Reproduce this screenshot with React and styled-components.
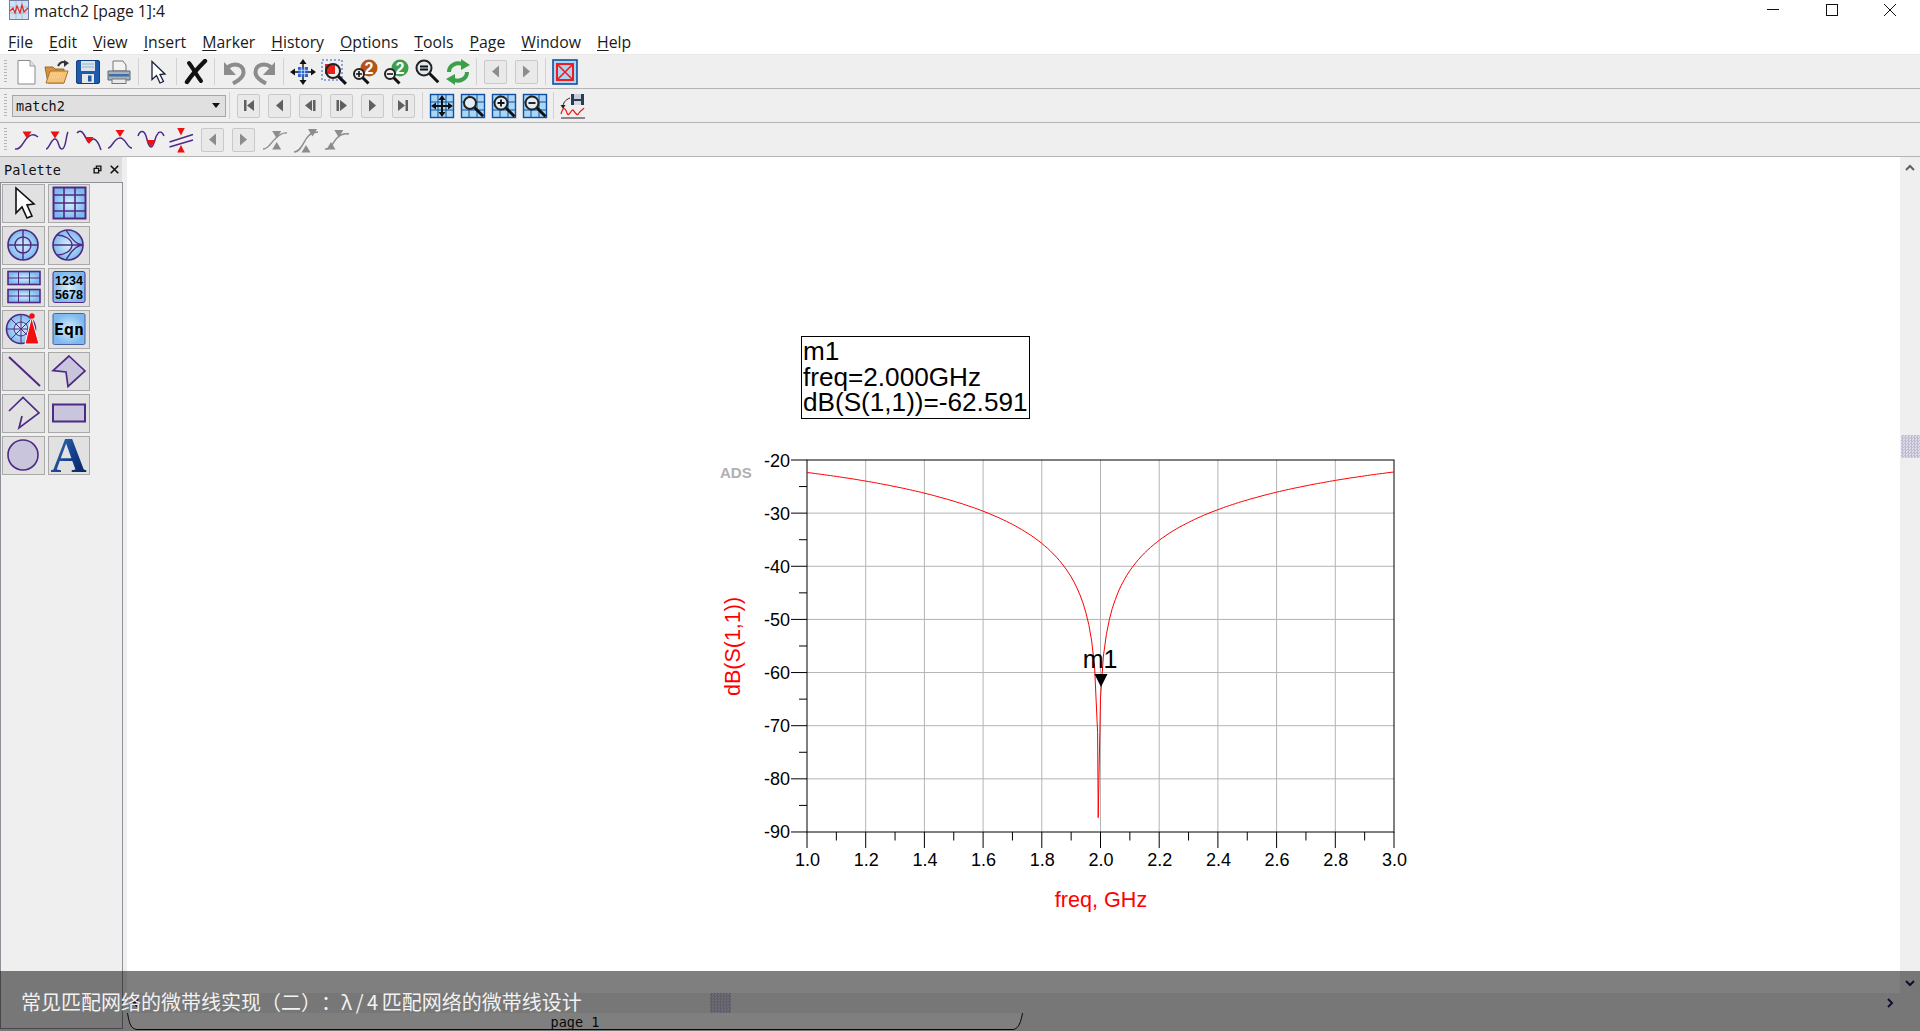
import React from 'react'
import styled, { createGlobalStyle } from 'styled-components'

const GlobalStyle = createGlobalStyle`
  html, body { margin: 0; padding: 0; background: #fff; overflow: hidden; }
  #root { height: 100vh; }
`

const PURPLE = '#4f2a85'
const LAVENDER = '#c9c5dd'
const GREYED = '#8c8c8c'
const MONO = '"DejaVu Sans Mono", "Liberation Mono", monospace'

const Frame = styled.div`
  position: relative;
  display: flex;
  flex-direction: column;
  height: 100vh;
  overflow: hidden;
  background: #fff;
`
const TitleBar = styled.div`
  display: flex;
  align-items: flex-start;
  height: 30px;
  padding-left: 9px;
`
const TitleText = styled.span`
  margin: 1px 0 0 5px;
  font: 15.7px/20px "Open Sans", "Noto Sans", sans-serif;
  color: #1a1a1a;
`
const WindowButtons = styled.div`
  display: flex;
  margin-left: auto;
  padding-right: 24px;
  gap: 46.5px;
`
const MenuBar = styled.div`
  display: flex;
  align-items: center;
  gap: 16px;
  height: 24px;
  padding-left: 8px;
  border-bottom: 1px solid #e9e9e9;
  font: 15.8px "Open Sans", "Noto Sans", sans-serif;
  color: #1a1a1a;
  u { text-underline-offset: 2px; }
`
const Toolbar = styled.div`
  display: flex;
  align-items: center;
  box-sizing: border-box;
  height: 34px;
  padding-left: 4px;
  background: #efefef;
  border-bottom: 1px solid #b4b4b4;
`
const Grip = styled.i`
  width: 3px;
  height: 24px;
  margin-right: ${p => p.$lead}px;
  background: repeating-linear-gradient(#b5b5b5 0 1px, transparent 1px 3px);
`
const Slot = styled.span`
  display: flex;
  align-items: center;
  justify-content: center;
  width: 31px;
  height: 33px;
  flex: none;
`
const Sep = styled.i`
  width: 1px;
  height: 27px;
  flex: none;
  margin: 0 ${p => p.$w / 2 - 0.5}px;
  background: #d2d2d2;
`
const NavButton = styled.span`
  display: flex;
  align-items: center;
  justify-content: center;
  box-sizing: border-box;
  width: 23px;
  height: 24px;
  background: #e9e9e9;
  border: 1px solid #c9c9c9;
  border-radius: 2px;
`
const Combo = styled.div`
  display: flex;
  align-items: center;
  justify-content: space-between;
  box-sizing: border-box;
  width: 214px;
  height: 22px;
  padding: 0 5px 0 3px;
  background: #e0e0e0;
  border: 1px solid #a6a6a6;
  font: 13.5px ${MONO};
  color: #111;
`
const ComboArrow = styled.i`
  border: 4.5px solid transparent;
  border-top: 5px solid #111;
  border-bottom: 0;
`
const Main = styled.div`
  display: flex;
  flex: 1;
  min-height: 0;
`
const Dock = styled.div`
  display: flex;
  flex-direction: column;
  width: 127px;
  flex: none;
  background: #efefef;
`
const DockHeader = styled.div`
  display: flex;
  align-items: center;
  gap: 8px;
  box-sizing: border-box;
  width: 122px;
  height: 25px;
  padding: 0 3px 0 4px;
  background: #dedede;
  font: 13.5px ${MONO};
  color: #111;
  span { margin-right: auto; }
`
const DockPanel = styled.div`
  flex: 1;
  box-sizing: border-box;
  width: 123px;
  margin-bottom: 2px;
  padding: 1px;
  border: 1px solid #8f8f97;
`
const PaletteGrid = styled.div`
  display: grid;
  grid-template-columns: 43px 42px;
  grid-auto-rows: 39px;
  gap: 3px;
`
const PaletteButton = styled.span`
  display: block;
  box-sizing: border-box;
  background: #e1e1e1;
  border: 1px solid #a9a9a9;
  svg { display: block; overflow: visible; }
  &:nth-child(even) svg { margin-left: -1px; }
`
const Workspace = styled.div`
  display: flex;
  flex-direction: column;
  flex: 1;
  min-width: 0;
`
const WorkRow = styled.div`
  display: flex;
  flex: 1;
  min-height: 0;
`
const Canvas = styled.div`
  flex: 1;
  padding: 179px 0 0 573px;
`
const MarkerBox = styled.div`
  box-sizing: border-box;
  width: 229px;
  height: 83px;
  margin-left: 101px;
  padding: 2px 0 0 1px;
  border: 1px solid #000;
  font: 26.15px/25.7px "Liberation Sans", Arial, sans-serif;
  color: #000;
  white-space: nowrap;
`
const ChartSvg = styled.svg`
  display: block;
  margin-top: 31px;
  font-family: "Liberation Sans", Arial, sans-serif;
`
const VScroll = styled.div`
  display: flex;
  flex-direction: column;
  align-items: center;
  width: 20px;
  flex: none;
  background: #efefef;
`
const VThumb = styled.i`
  width: 19px;
  height: 23px;
  margin-top: 258px;
  margin-bottom: auto;
  background: repeating-conic-gradient(#bdbbd4 0 25%, #dcdbe6 0 50%) 0 0 / 3px 3px;
`
const ArrowCell = styled.span`
  display: flex;
  align-items: center;
  justify-content: center;
  height: 20px;
`
const HScroll = styled.div`
  display: flex;
  align-items: center;
  height: 20px;
  padding: 0 26px 0 5px;
  background: #efefef;
`
const HThumb = styled.i`
  width: 21px;
  height: 20px;
  margin-left: 571px;
  margin-right: auto;
  background: repeating-conic-gradient(#bdbbd4 0 25%, #dcdbe6 0 50%) 0 0 / 3px 3px;
`
const TabStrip = styled.div`
  height: 18px;
  background: #efefef;
`
const PageTab = styled.div`
  position: relative;
  width: 896px;
  height: 17px;
  font: 13.5px/18px ${MONO};
  color: #111;
  text-align: center;
`
const TabOutline = styled.svg`
  position: absolute;
  left: 0;
  top: 0;
`
const TabLabel = styled.span`
  position: relative;
`
const CaptionOverlay = styled.div`
  position: absolute;
  left: 0;
  right: 0;
  bottom: 0;
  height: 60px;
  box-sizing: border-box;
  padding: 17px 0 0 21px;
  background: rgba(0, 0, 0, 0.5);
  font: 400 20px/28px "Noto Sans CJK SC", sans-serif;
  text-spacing-trim: space-all;
  color: #f2f2f2;
  white-space: nowrap;
`
const WideLatin = styled.span`
  letter-spacing: 3.6px;
`
const HiddenDefs = styled.svg`
  position: absolute;
  width: 0;
  height: 0;
`

// shared gradients for the ADS bitmap-looking icons
const Defs = () => (
  <HiddenDefs aria-hidden="true">
    <defs>
      <radialGradient id="sky">
        <stop offset="0" stopColor="#d9f1fb" />
        <stop offset="1" stopColor="#7db9ee" />
      </radialGradient>
      <linearGradient id="inkA" x1="0" y1="0" x2="1" y2="1">
        <stop offset="0" stopColor="#3f7fc4" />
        <stop offset="0.6" stopColor="#123a86" />
        <stop offset="1" stopColor="#071f55" />
      </linearGradient>
    </defs>
  </HiddenDefs>
)

const Ico = ({ w = 26, h = 26, children }) => (
  <svg width={w} height={h} viewBox={`0 0 ${w} ${h}`} fill="none">{children}</svg>
)

const Lens = ({ x, y, r = 6, fill = '#dbe9f5', len = 8 }) => (
  <g>
    <line x1={x + r * 0.7} y1={y + r * 0.7} x2={x + r * 0.7 + len} y2={y + r * 0.7 + len} stroke="#111" strokeWidth="3" />
    <circle cx={x} cy={y} r={r} fill={fill} stroke="#222" strokeWidth="2" />
  </g>
)

const Tile = ({ children }) => (
  <Ico>
    <rect x="1.5" y="1.5" width="23" height="23" fill="#a9d6f5" stroke="#0f4f9e" strokeWidth="1.4" />
    <path d="M9 2v22M17 2v22M2 9h22M2 17h22" stroke="#0f4f9e" strokeWidth="1" />
    {children}
  </Ico>
)

const NewDoc = () => (
  <Ico>
    <path d="M5 1.5H17L22 7V25H5Z" fill="#fff" stroke="#8a8a8a" />
    <path d="M17 1.5V7H22" fill="#e4e4e4" stroke="#9a9a9a" />
  </Ico>
)
const OpenFolder = () => (
  <Ico>
    <path d="M1 8H9L11 10H20V24H4Z" fill="#d8923f" stroke="#9a6a2c" />
    <path d="M6 12H24L20 24H2Z" fill="#f6c277" stroke="#a8742f" />
    <path d="M7 15H19M6 18H18" stroke="#fbe2ba" strokeDasharray="1 1" />
    <path d="M14 7C16 3 19 2 22 4" stroke="#333" strokeWidth="2" />
    <path d="M20 1L25 4L20 8Z" fill="#333" />
  </Ico>
)
const Floppy = () => (
  <Ico>
    <rect x="1.5" y="1.5" width="23" height="23" rx="1.5" fill="#1f5bab" stroke="#123e7c" />
    <rect x="6" y="2" width="14" height="10" fill="#d9e4ef" />
    <path d="M7 5H19M7 8H19" stroke="#9ab4d0" />
    <rect x="7" y="15" width="12" height="9" fill="#e7e7e7" />
    <rect x="13" y="16.5" width="3.5" height="6" fill="#1f5bab" />
  </Ico>
)
const Printer = () => (
  <Ico>
    <path d="M7 2H17L20 6V12H7Z" fill="#f3f3f3" stroke="#777" />
    <path d="M2 12H24V21H2Z" fill="#a9b2bb" stroke="#5c6670" />
    <rect x="3" y="15" width="20" height="2.5" fill="#3d6fae" />
    <rect x="6" y="20" width="14" height="4.5" fill="#e9e9e9" stroke="#777" />
  </Ico>
)
const Pointer = () => (
  <Ico>
    <path d="M7 2.5V20.5L11.5 16.5L15 24L18.5 22.5L15 15.5L20 15Z" fill="#fff" stroke="#15203a" strokeWidth="1.3" />
  </Ico>
)
const CrossMark = () => (
  <Ico>
    <path d="M4 23C8 17 15 9 22 2" stroke="#111" strokeWidth="4.4" strokeLinecap="round" />
    <path d="M6 4C10 9 14 17 18 22" stroke="#111" strokeWidth="4" strokeLinecap="round" />
  </Ico>
)
const Undo = () => (
  <Ico>
    <path d="M3 3V16H15Z" fill={GREYED} />
    <path d="M7 8C14 3 23 6 22.5 14C22 19 17 22 12 24.5" stroke={GREYED} strokeWidth="4" />
  </Ico>
)
const Redo = () => (
  <Ico>
    <path d="M23 3V16H11Z" fill={GREYED} />
    <path d="M19 8C12 3 3 6 3.5 14C4 19 9 22 14 24.5" stroke={GREYED} strokeWidth="4" />
  </Ico>
)
const MoveArrows = () => (
  <Ico>
    <rect x="8" y="8" width="10" height="10" fill="#2c62c9" />
    <path d="M11.3 8v10M14.6 8v10M8 11.3h10M8 14.6h10" stroke="#dce7fb" strokeWidth="0.8" />
    <path d="M13 0L16.5 5H9.5ZM13 26L9.5 21H16.5ZM0 13L5 9.5V16.5ZM26 13L21 16.5V9.5Z" fill="#111" />
    <path d="M13 4V8M13 18V22M4 13H8M18 13H22" stroke="#111" strokeWidth="1.4" />
  </Ico>
)
const ZoomArea = () => (
  <Ico>
    <rect x="1" y="1" width="20" height="20" stroke="#2a5fc4" strokeDasharray="2 2" />
    <path d="M4 5H14V15H4Z" fill="#e8201c" />
    <Lens x={12} y={12} r={7} fill="none" />
    <path d="M7 12A5 5 0 0 1 12 7V12Z" fill="#e8201c" />
  </Ico>
)
const ZoomBadge = ({ sign, color }) => (
  <Ico w={28}>
    <circle cx="18" cy="9" r="8.5" fill={color} />
    <text x="18" y="15" textAnchor="middle" fontSize="16" fontWeight="700" fill="#fff" fontFamily="Liberation Sans">2</text>
    <Lens x={8} y={15} r={5} fill="#f2f2f2" len={6} />
    <path d={sign === '+' ? 'M5 15H11M8 12V18' : 'M5 15H11'} stroke="#111" strokeWidth="1.6" />
  </Ico>
)
const ZoomFit = () => (
  <Ico>
    <Lens x={10} y={9} r={7.5} fill="#dfe8f2" len={9} />
    <path d="M6 7.5H14M6 10.5H14" stroke="#111" strokeWidth="1.8" />
  </Ico>
)
const Refresh = () => (
  <Ico>
    <path d="M4 13C4 6 12 2 19 6" stroke="#3ba04a" strokeWidth="4" />
    <path d="M16 0L25 6L16 11Z" fill="#3ba04a" />
    <path d="M22 13C22 20 14 24 7 20" stroke="#3ba04a" strokeWidth="4" />
    <path d="M10 15L1 20L10 26Z" fill="#3ba04a" />
  </Ico>
)
const Nav = ({ d, dark }) => (
  <NavButton>
    <svg width="15" height="15" viewBox="0 0 15 15"><path d={d} fill={dark ? '#5f5f5f' : GREYED} /></svg>
  </NavButton>
)
const PREV = 'M11 1.5V13.5L4 7.5Z'
const NEXT = 'M4 1.5V13.5L11 7.5Z'
const FIRST = 'M3 2H5.5V13H3ZM13 2V13L6 7.5Z'
const LAST = 'M9.5 2H12V13H9.5ZM2 2V13L9 7.5Z'
const STEP_BACK = 'M10 2H12.5V13H10ZM9 2V13L2 7.5Z'
const STEP_FORWARD = 'M2.5 2H5V13H2.5ZM6 2V13L13 7.5Z'

const NoDisplay = () => (
  <Ico>
    <rect x="1" y="1" width="24" height="24" fill="#a9d6f5" stroke="#0f4f9e" strokeWidth="1.6" />
    <rect x="5" y="5" width="16" height="16" stroke="#f21b1b" strokeWidth="2" />
    <path d="M5 5L21 21M21 5L5 21" stroke="#f21b1b" strokeWidth="1.6" />
  </Ico>
)
const ExportData = () => (
  <Ico>
    <rect x="11" y="1" width="13" height="11" fill="#2a3c58" />
    <rect x="14" y="1" width="7" height="5" fill="#c5ced8" />
    <rect x="14" y="8" width="7" height="4" fill="#d8d8d8" />
    <path d="M10 5C5 7 3 10 3 14" stroke="#222" />
    <path d="M0.5 12H5.5L3 16Z" fill="#222" />
    <path d="M1 21C3 14 5 14 7 20C9 25 11 16 13 17C15 19 17 24 19 20C21 17 23 17 24 15" stroke="#f01818" strokeWidth="1.3" />
    <path d="M1 25H25" stroke="#222" />
  </Ico>
)

const RedTip = ({ x, y, w = 9, h = 7 }) => (
  <path d={`M${x - w / 2} ${y}H${x + w / 2}L${x} ${y + h}Z`} fill="#ef1010" />
)
const MarkerIco = ({ wave, tip }) => (
  <Ico w={28} h={28}>
    <path d={wave} stroke={PURPLE} strokeWidth="1.5" />
    <RedTip x={tip[0]} y={tip[1]} />
  </Ico>
)
const DeltaMarker = () => (
  <Ico w={28} h={28}>
    <RedTip x={13} y={2} w={7.5} h={7.5} />
    <path d="M1.5 16L25 8.5M1.5 21L25 14" stroke={PURPLE} strokeWidth="1.5" />
    <path d="M13 19L9.2 26.5H16.8Z" fill="#ef1010" />
  </Ico>
)
const BoundMarker = ({ wave, topX, topY, lowX, lowY }) => (
  <Ico w={28} h={28}>
    <path d={wave} stroke={GREYED} strokeWidth="1.4" />
    <path d={`M${topX - 4.5} ${topY}H${topX + 4.5}L${topX} ${topY + 7.5}Z`} fill={GREYED} />
    <path d={`M${lowX} ${lowY}L${lowX - 4.5} ${lowY + 7.5}H${lowX + 4.5}Z`} fill={GREYED} />
  </Ico>
)

const FileIcons = [NewDoc, OpenFolder, Floppy, Printer]
const ZOOMS = [
  <ZoomArea />,
  <ZoomBadge sign="+" color="#b4531c" />,
  <ZoomBadge sign="-" color="#3f9e4c" />,
  <ZoomFit />,
  <Refresh />,
]
const TILES = [
  <Tile>
    <path d="M13 2L16.5 7H9.5ZM13 24L9.5 19H16.5ZM2 13L7 9.5V16.5ZM24 13L19 16.5V9.5Z" fill="#111" />
    <path d="M5 13H21M13 5V21" stroke="#111" strokeWidth="2" />
  </Tile>,
  <Tile><Lens x={10} y={10} r={6} fill="#e4edf5" len={9} /></Tile>,
  <Tile>
    <Lens x={10} y={10} r={6.5} fill="#e4edf5" len={9} />
    <path d="M6.5 10H13.5M10 6.5V13.5" stroke="#111" strokeWidth="1.8" />
  </Tile>,
  <Tile>
    <Lens x={10} y={10} r={6.5} fill="#e4edf5" len={9} />
    <path d="M6.5 10H13.5" stroke="#111" strokeWidth="1.8" />
  </Tile>,
]

const MARKERS = [
  <MarkerIco wave="M2 23C8 24 10 16 14 12C17 9 20 7 25 11" tip={[14, 5.5]} />,
  <MarkerIco wave="M2 23C5 23 7 13 11 13C15 13 14 23 18 23C22 23 22 9 24 6" tip={[11, 5.5]} />,
  <MarkerIco wave="M2 7C6 2 9 8 12 14C14 20 16 12 19 13C22 14 24 18 26 24" tip={[14, 11]} />,
  <MarkerIco wave="M2 22C6 22 8 12 14 12C20 12 21 22 26 22" tip={[14, 4]} />,
  <MarkerIco wave="M1 10C3 4 7 4 9 10C11 17 12 21 14 21C17 21 18 11 20 9C22 5 25 5 27 10" tip={[14, 14]} />,
  <DeltaMarker />,
]
const PaletteIcons = [
  <path d="M13 3V28L19 22L24 33L29 31L24 20L31 19Z" fill="#fff" stroke="#111" strokeWidth="1.6" />,
  <g>
    <rect x="5.5" y="2.5" width="32" height="31" fill="url(#sky)" stroke={PURPLE} strokeWidth="2" />
    <path d="M16 3V33M27 3V33M6 10H37M6 18H37M6 26H37" stroke={PURPLE} strokeWidth="1.6" />
  </g>,
  <g>
    <circle cx="20" cy="18" r="15" fill="url(#sky)" stroke={PURPLE} strokeWidth="1.6" />
    <circle cx="20" cy="18" r="8" stroke={PURPLE} strokeWidth="1.4" />
    <path d="M5 18H35M20 3V33" stroke={PURPLE} strokeWidth="1.4" />
  </g>,
  <g>
    <circle cx="20" cy="18" r="15" fill="url(#sky)" stroke={PURPLE} strokeWidth="1.6" />
    <path d="M5 18H35M35 18C28 18 22 10 18 3M35 18C28 18 22 26 18 33" stroke={PURPLE} strokeWidth="1.4" />
    <path d="M9 8C16 8 24 12 24 18C24 24 16 28 9 28" stroke={PURPLE} strokeWidth="1.4" />
  </g>,
  <g>
    {[2.5, 20.5].map(y => (
      <g key={y}>
        <rect x="5" y={y} width="32" height="13" fill="url(#sky)" stroke={PURPLE} strokeWidth="1.6" />
        <path d={`M15.5 ${y}V${y + 13}M26.5 ${y}V${y + 13}M5 ${y + 6.5}H37`} stroke={PURPLE} />
      </g>
    ))}
  </g>,
  <g>
    <rect x="5" y="2.5" width="32" height="31" rx="2" fill="url(#sky)" stroke={PURPLE} />
    <text x="21" y="15.5" textAnchor="middle" fontSize="12.5" fontWeight="700" fill="#000" fontFamily="Liberation Sans">1234</text>
    <text x="21" y="29.5" textAnchor="middle" fontSize="12.5" fontWeight="700" fill="#000" fontFamily="Liberation Sans">5678</text>
  </g>,
  <g>
    <circle cx="18" cy="18" r="14.5" fill="url(#sky)" stroke={PURPLE} strokeWidth="1.6" />
    <circle cx="18" cy="18" r="7" stroke={PURPLE} />
    <path d="M4 18H32M18 4V32M8 8L28 28M28 8L8 28" stroke={PURPLE} />
    <path d="M28.5 6L22 33H36Z" fill="#f10f0f" stroke="#fff" />
    <circle cx="29" cy="5" r="2.7" fill="#f10f0f" />
  </g>,
  <g>
    <rect x="5" y="2.5" width="32" height="31" rx="1.5" fill="url(#sky)" stroke="#4f5fa5" />
    <text x="21" y="24" textAnchor="middle" fontSize="16.5" fontWeight="700" fill="#000" fontFamily="DejaVu Sans Mono">Eqn</text>
  </g>,
  <path d="M6 4L37 33" stroke={PURPLE} strokeWidth="2" />,
  <path d="M21 3L37 18L20 33.5L18 19L5 17.5Z" fill={LAVENDER} stroke={PURPLE} strokeWidth="1.7" />,
  <path d="M6 16L20 2.5L36 18L16 33L19 21" stroke={PURPLE} strokeWidth="1.7" />,
  <rect x="5" y="9.5" width="32" height="17" fill={LAVENDER} stroke={PURPLE} strokeWidth="2" />,
  <circle cx="20" cy="18" r="15" fill={LAVENDER} stroke={PURPLE} strokeWidth="1.6" />,
  <text x="20.5" y="35" textAnchor="middle" fontSize="50" fontWeight="700" fill="url(#inkA)" fontFamily="Liberation Serif">A</text>,
]

// chart geometry is in page pixels, the svg viewBox starts at 700,450
const PLOT = { left: 807, right: 1394, top: 460, bottom: 832 }
const fx = f => PLOT.left + (f - 1) * 293.5
const dy = db => PLOT.top + (-20 - db) * 5.314
const F0 = 1.9932
const s11 = f => -22.3 + 20 * Math.log10(Math.abs(Math.sin((Math.PI * (f - F0)) / 4)) / 0.7071)

const curvePoints = () => {
  const pts = []
  for (let i = 0; i <= 200; i++) {
    const f = 1 + i * 0.01
    pts.push(`${fx(f).toFixed(1)},${dy(Math.max(s11(f), -87.3)).toFixed(1)}`)
    if (i === 99) pts.push(`1098.2,${dy(-87.3)}`)
  }
  return pts.join(' ')
}

const Chart = () => {
  const dbTicks = [-20, -30, -40, -50, -60, -70, -80, -90]
  const minorDb = [-25, -35, -45, -55, -65, -75, -85]
  const freqTicks = [1, 1.2, 1.4, 1.6, 1.8, 2, 2.2, 2.4, 2.6, 2.8, 3]
  const minorFreq = [1.1, 1.3, 1.5, 1.7, 1.9, 2.1, 2.3, 2.5, 2.7, 2.9]
  return (
    <ChartSvg width="720" height="470" viewBox="700 450 720 470">
      {dbTicks.slice(1, -1).map(d => (
        <line key={d} x1={PLOT.left} x2={PLOT.right} y1={dy(d)} y2={dy(d)} stroke="#b4b4b4" strokeWidth="1" />
      ))}
      {freqTicks.slice(1, -1).map(f => (
        <line key={f} x1={fx(f)} x2={fx(f)} y1={PLOT.top} y2={PLOT.bottom} stroke="#b4b4b4" strokeWidth="1" />
      ))}
      <rect x={PLOT.left} y={PLOT.top} width={PLOT.right - PLOT.left} height={PLOT.bottom - PLOT.top} stroke="#000" fill="none" />
      {dbTicks.map(d => (
        <g key={d}>
          <line x1="791" x2={PLOT.left} y1={dy(d)} y2={dy(d)} stroke="#000" />
          <text x="790" y={dy(d) + 6.5} textAnchor="end" fontSize="18" fill="#000">{d}</text>
        </g>
      ))}
      {minorDb.map(d => <line key={d} x1="799" x2={PLOT.left} y1={dy(d)} y2={dy(d)} stroke="#000" />)}
      {freqTicks.map(f => (
        <g key={f}>
          <line x1={fx(f)} x2={fx(f)} y1={PLOT.bottom} y2="848" stroke="#000" />
          <text x={fx(f) + 0.5} y="866" textAnchor="middle" fontSize="18" fill="#000">{f.toFixed(1)}</text>
        </g>
      ))}
      {minorFreq.map(f => <line key={f} x1={fx(f)} x2={fx(f)} y1={PLOT.bottom} y2="840.5" stroke="#000" />)}
      <polyline points={curvePoints()} fill="none" stroke="#f00" strokeWidth="1" />
      <path d="M1094.5 674H1107.5L1101 687Z" fill="#000" />
      <text x="1100" y="668" textAnchor="middle" fontSize="25" fill="#000">m1</text>
      <text x="1101" y="907" textAnchor="middle" fontSize="21.6" fill="#f00">freq, GHz</text>
      <text transform="translate(740 646.5) rotate(-90)" textAnchor="middle" fontSize="21.5" fill="#f00">dB(S(1,1))</text>
      <text x="720" y="478" fontSize="15" fontWeight="700" fill="#b0b0b0">ADS</text>
    </ChartSvg>
  )
}

const MENU = ['File', 'Edit', 'View', 'Insert', 'Marker', 'History', 'Options', 'Tools', 'Page', 'Window', 'Help']

export default function App() {
  return (
    <Frame>
      <GlobalStyle />
      <Defs />
      <TitleBar>
        <Ico w={20} h={20}>
          <rect x="0.5" y="0.5" width="19" height="19" fill="#cfe2f5" stroke="#6f7fa8" />
          <path d="M1 7H19M1 13H19M7 1V19M13 1V19" stroke="#9ab0cf" strokeWidth="0.7" />
          <path d="M1 11L4 8L6 13L8 6L11 13L13 5L15 12L19 8" stroke="#e02a20" strokeWidth="1.2" />
        </Ico>
        <TitleText>match2 [page 1]:4</TitleText>
        <WindowButtons>
          <svg width="12" height="20" viewBox="0 0 12 20"><path d="M0 9.5H12" stroke="#111" /></svg>
          <svg width="12" height="20" viewBox="0 0 12 20"><rect x="0.5" y="4.5" width="11" height="11" fill="none" stroke="#111" /></svg>
          <svg width="12" height="20" viewBox="0 0 12 20"><path d="M0 4L12 16M12 4L0 16" stroke="#111" /></svg>
        </WindowButtons>
      </TitleBar>
      <MenuBar>
        {MENU.map(m => <span key={m}><u>{m[0]}</u>{m.slice(1)}</span>)}
      </MenuBar>
      <Toolbar>
        <Grip $lead={3} />
        {FileIcons.map((Icon, i) => <Slot key={i}><Icon /></Slot>)}
        <Sep $w={8} />
        <Slot><Pointer /></Slot>
        <Sep $w={7} />
        <Slot><CrossMark /></Slot>
        <Sep $w={7} />
        <Slot><Undo /></Slot>
        <Slot><Redo /></Slot>
        <Sep $w={7} />
        <Slot><MoveArrows /></Slot>
        {ZOOMS.map((icon, i) => <Slot key={i}>{icon}</Slot>)}
        <Sep $w={7} />
        <Slot><Nav d={PREV} /></Slot>
        <Slot><Nav d={NEXT} /></Slot>
        <Sep $w={7} />
        <Slot><NoDisplay /></Slot>
      </Toolbar>
      <Toolbar>
        <Grip $lead={5} />
        <Combo>match2<ComboArrow /></Combo>
        <Sep $w={7} />
        {[FIRST, PREV, STEP_BACK, STEP_FORWARD, NEXT, LAST].map(d => (
          <Slot key={d}><Nav d={d} dark /></Slot>
        ))}
        <Sep $w={7} />
        {TILES.map((tile, i) => <Slot key={i}>{tile}</Slot>)}
        <Sep $w={7} />
        <Slot><ExportData /></Slot>
      </Toolbar>
      <Toolbar>
        <Grip $lead={4} />
        {MARKERS.map((icon, i) => <Slot key={i}>{icon}</Slot>)}
        <Slot><Nav d={PREV} /></Slot>
        <Slot><Nav d={NEXT} /></Slot>
        <Slot><BoundMarker wave="M2 23C8 23 10 16 14 13C18 9 22 6 26 7" topX={15.7} topY={5} lowX={15.7} lowY={16} /></Slot>
        <Slot><BoundMarker wave="M2 26C8 26 11 18 14 13C17 8 21 6 26 6" topX={20.5} topY={3} lowX={14} lowY={19} /></Slot>
        <Slot><BoundMarker wave="M2 23C8 24 10 16 14 12C17 9 20 7 26 8" topX={15.8} topY={4} lowX={8} lowY={16} /></Slot>
      </Toolbar>
      <Main>
        <Dock>
          <DockHeader>
            <span>Palette</span>
            <svg width="9" height="9" viewBox="0 0 12 12" fill="none">
              <path d="M1.5 4.5H7.5V10.5H1.5ZM4.5 4.5V1.5H10.5V7.5H7.5" stroke="#111" strokeWidth="1.8" />
            </svg>
            <svg width="9" height="9" viewBox="0 0 12 12">
              <path d="M1 1L11 11M11 1L1 11" stroke="#111" strokeWidth="2.2" />
            </svg>
          </DockHeader>
          <DockPanel>
            <PaletteGrid>
              {PaletteIcons.map((icon, i) => (
                <PaletteButton key={i}>
                  <svg width="41" height="37" viewBox="0 0 41 37" fill="none">{icon}</svg>
                </PaletteButton>
              ))}
            </PaletteGrid>
          </DockPanel>
        </Dock>
        <Workspace>
          <WorkRow>
            <Canvas>
              <MarkerBox>m1<br />freq=2.000GHz<br />dB(S(1,1))=-62.591</MarkerBox>
              <Chart />
            </Canvas>
            <VScroll>
              <ArrowCell>
                <svg width="10" height="7" viewBox="0 0 10 7"><path d="M1 6L5 2L9 6" fill="none" stroke="#606060" strokeWidth="2" /></svg>
              </ArrowCell>
              <VThumb />
              <ArrowCell>
                <svg width="10" height="7" viewBox="0 0 10 7"><path d="M1 1L5 5L9 1" fill="none" stroke="#1c1f5e" strokeWidth="2" /></svg>
              </ArrowCell>
            </VScroll>
          </WorkRow>
          <HScroll>
            <svg width="7" height="10" viewBox="0 0 7 10"><path d="M6 1L2 5L6 9" fill="none" stroke="#1c1f5e" strokeWidth="2" /></svg>
            <HThumb />
            <svg width="7" height="10" viewBox="0 0 7 10"><path d="M1 1L5 5L1 9" fill="none" stroke="#1c1f5e" strokeWidth="2" /></svg>
          </HScroll>
          <TabStrip>
            <PageTab>
              <TabOutline width="896" height="17" viewBox="0 0 896 17">
                <path d="M0.5 0C2 8 3 16 10 16.5H886C892 16 894 8 895.5 0" fill="#fff" stroke="#111" />
              </TabOutline>
              <TabLabel>page 1</TabLabel>
            </PageTab>
          </TabStrip>
        </Workspace>
      </Main>
      <CaptionOverlay>常见匹配网络的微带线实现（二）：<WideLatin>λ/4</WideLatin>匹配网络的微带线设计</CaptionOverlay>
    </Frame>
  )
}
